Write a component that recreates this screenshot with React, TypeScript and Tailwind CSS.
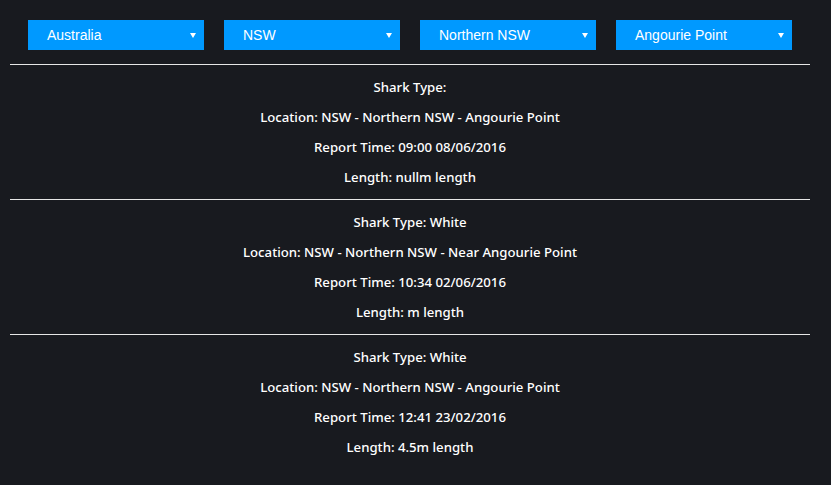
const regions = ['Australia', 'NSW', 'Northern NSW', 'Angourie Point'];

const reports = [
  { type: '', location: 'NSW - Northern NSW - Angourie Point', time: '09:00 08/06/2016', length: 'nullm length' },
  { type: 'White', location: 'NSW - Northern NSW - Near Angourie Point', time: '10:34 02/06/2016', length: 'm length' },
  { type: 'White', location: 'NSW - Northern NSW - Angourie Point', time: '12:41 23/02/2016', length: '4.5m length' },
];

function FakeSelect({ label }: { label: string }) {
  return (
    <div
      className="w-[176px] h-[30px] bg-[#0099ff] text-white flex items-center justify-between pl-[19px] pr-[8px] text-[14px]"
      style={{ fontFamily: '"Liberation Sans", Arial, sans-serif' }}
    >
      <span>{label}</span>
      <svg width="6" height="6" viewBox="0 0 6 6" className="fill-white">
        <path d="M0 1 L6 1 L3 6 Z" />
      </svg>
    </div>
  );
}

export default function App() {
  return (
    <div className="min-h-screen w-full bg-[#181a1f] pt-[20px]">
      <div className="mx-[10px] w-[800px]">
        {/* Filters */}
        <div className="flex justify-center gap-[20px]">
          {regions.map((r) => (
            <FakeSelect key={r} label={r} />
          ))}
        </div>

        {/* Reports */}
        <div className="mt-[14px]">
          {reports.map((r, i) => (
            <div key={i} className="border-t border-[#e6e6e6] pt-[7px] pb-[7px]">
              {[
                `Shark Type: ${r.type}`,
                `Location: ${r.location}`,
                `Report Time: ${r.time}`,
                `Length: ${r.length}`,
              ].map((line) => (
                <p
                  key={line}
                  className="h-[30px] leading-[30px] text-center text-white text-[13.2px] font-medium"
                  style={{ fontFamily: '"Noto Sans", sans-serif' }}
                >
                  {line}
                </p>
              ))}
            </div>
          ))}
        </div>
      </div>
    </div>
  );
}
